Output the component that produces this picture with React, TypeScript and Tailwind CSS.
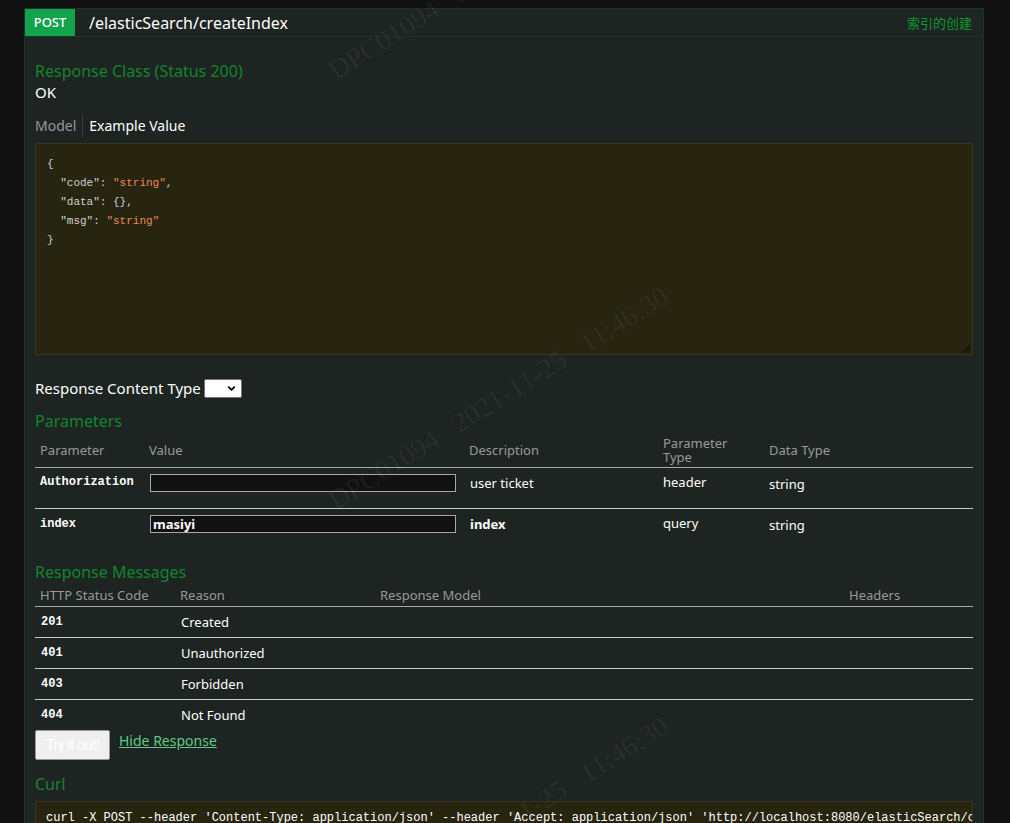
import { ChevronDown } from "lucide-react";

const sans = "font-['Noto_Sans','Noto_Sans_CJK_SC',sans-serif]";
const mono = "font-['Liberation_Mono','DejaVu_Sans_Mono',monospace]";

const params = [
  { name: "Authorization", value: "", desc: "user ticket", descBold: false, type: "header", dataType: "string" },
  { name: "index", value: "masiyi", desc: "index", descBold: true, type: "query", dataType: "string" },
];

const messages = [
  { code: "201", reason: "Created" },
  { code: "401", reason: "Unauthorized" },
  { code: "403", reason: "Forbidden" },
  { code: "404", reason: "Not Found" },
];

// faint rotated watermark tiles over the page
const marks = [
  { left: 338, top: 58 },
  { left: 338, top: 488 },
  { left: 338, top: 918 },
  { left: -332, top: 493 },
];

function Watermark({ left, top }: { left: number; top: number }) {
  return (
    <div
      className="pointer-events-none absolute origin-bottom-left -rotate-[32deg] whitespace-pre font-['Liberation_Serif',serif] text-[28px] leading-[26px] text-white/[0.06]"
      style={{ left, top }}
    >
      {"DPC01094   2021-11-25   11:46:30"}
    </div>
  );
}

export default function App() {
  return (
    <div className={`relative min-h-[823px] w-full overflow-hidden bg-[#121212] pt-[8px] ${sans}`}>
      <div className="ml-[24px] w-[960px] border border-[#1d3527] bg-[#1e2421]">
        {/* Header */}
        <div className="flex h-[28px] items-start border-b border-[#1d3527]">
          <span className="flex h-[27px] w-[50px] items-center justify-center bg-[#12a34c] text-[13px] font-medium text-white">
            POST
          </span>
          <span className="ml-[14px] text-[16px] leading-[28px] text-white">/elasticSearch/createIndex</span>
          <span className="ml-auto mr-[11px] text-[13px] leading-[28px] text-[#0c9a33]">索引的创建</span>
        </div>

        {/* Body */}
        <div className="px-[10px] pt-[24px]">
          <h4 className="text-[16px] leading-[20px] text-[#11862f]">Response Class (Status 200)</h4>
          <div className="mt-[1px] text-[15px] leading-[20px] text-white">OK</div>

          <div className="mt-[12px] flex items-center text-[14px] leading-[20px]">
            <span className="text-[#9a9a9a]">Model</span>
            <span className="mx-[6px] h-[24px] border-l border-[#3b3f3c]" />
            <span className="text-white">Example Value</span>
          </div>

          <div className="relative mt-[5px] h-[212px] border border-[#3a3720] bg-[#272410] px-[11px] pt-[11px]">
            <pre className={`${mono} text-[11px] leading-[19px] text-[#d0d0d0]`}>
              {"{\n"}
              {'  "code": '}
              <span className="text-[#ec8a55]">"string"</span>
              {",\n"}
              {'  "data": {},\n'}
              {'  "msg": '}
              <span className="text-[#ec8a55]">"string"</span>
              {"\n}"}
            </pre>
            <svg className="absolute bottom-[1px] right-[1px]" width="9" height="9" viewBox="0 0 9 9">
              <path d="M1 8 L8 1 M4 8 L8 4" stroke="#111" strokeWidth="1.2" />
            </svg>
          </div>

          <div className="mt-[23px] flex items-center text-[15px] leading-[20px] text-white">
            <span>Response Content Type</span>
            <span className="ml-[3px] flex h-[19px] w-[38px] items-center justify-end rounded-[2px] border border-[#767676] bg-white pr-[4px]">
              <ChevronDown className="h-[11px] w-[11px] text-black" strokeWidth={4} />
            </span>
          </div>

          <h4 className="mt-[13px] text-[16px] leading-[20px] text-[#11862f]">Parameters</h4>
          <table className="w-full table-fixed border-collapse text-left">
            <colgroup>
              <col className="w-[109px]" />
              <col className="w-[320px]" />
              <col className="w-[194px]" />
              <col className="w-[106px]" />
              <col />
            </colgroup>
            <thead>
              <tr className="h-[36px] border-b border-[#a8a8a8] text-[13px] leading-[14px] text-[#9a9a9a]">
                <th className="pl-[5px] pt-[2px] align-middle font-normal">Parameter</th>
                <th className="pl-[5px] pt-[2px] align-middle font-normal">Value</th>
                <th className="pl-[5px] pt-[2px] align-middle font-normal">Description</th>
                <th className="pl-[5px] pt-[2px] align-middle font-normal">
                  Parameter
                  <br />
                  Type
                </th>
                <th className="pl-[5px] pt-[2px] align-middle font-normal">Data Type</th>
              </tr>
            </thead>
            <tbody>
              {params.map((p, i) => (
                <tr
                  key={p.name}
                  className={`h-[41px] align-top text-[13px] leading-[18px] text-white ${
                    i === 0 ? "border-b border-[#c8c8c8]" : ""
                  }`}
                >
                  <td className={`pl-[5px] ${i === 0 ? "pt-[5px]" : "pt-[6px]"} ${mono} text-[12px] font-bold`}>{p.name}</td>
                  <td className="pl-[6px] pr-[8px] pt-[6px]">
                    <div className="h-[18px] w-[306px] border border-[#a9a9a9] bg-[#111111] px-[2px] text-[13px] font-bold leading-[16px] text-white">
                      {p.value}
                    </div>
                  </td>
                  <td className={`pl-[6px] pt-[6px] ${p.descBold ? "font-bold" : ""}`}>{p.desc}</td>
                  <td className="pl-[5px] pt-[5px]">{p.type}</td>
                  <td className="pl-[5px] pt-[7px]">{p.dataType}</td>
                </tr>
              ))}
            </tbody>
          </table>

          <h4 className="mt-[13px] text-[16px] leading-[20px] text-[#11862f]">Response Messages</h4>
          <table className="w-full table-fixed border-collapse text-left">
            <colgroup>
              <col className="w-[140px]" />
              <col className="w-[200px]" />
              <col className="w-[469px]" />
              <col />
            </colgroup>
            <thead>
              <tr className="h-[24px] border-b border-[#a8a8a8] text-[13px] leading-[16px] text-[#9a9a9a]">
                <th className="pl-[5px] pt-[2px] font-normal">HTTP Status Code</th>
                <th className="pl-[5px] pt-[2px] font-normal">Reason</th>
                <th className="pl-[5px] pt-[2px] font-normal">Response Model</th>
                <th className="pl-[5px] pt-[2px] font-normal">Headers</th>
              </tr>
            </thead>
            <tbody>
              {messages.map((m, i) => (
                <tr
                  key={m.code}
                  className={`h-[31px] text-[13px] leading-[18px] text-white ${
                    i < messages.length - 1 ? "border-b border-[#c8c8c8]" : ""
                  }`}
                >
                  <td className={`pl-[6px] ${mono} text-[12px] font-bold`}>{m.code}</td>
                  <td className="pl-[6px]">{m.reason}</td>
                  <td />
                  <td />
                </tr>
              ))}
            </tbody>
          </table>

          <div className="flex items-start">
            <button className="h-[30px] w-[75px] rounded-[2px] border border-[#9a9a9a] bg-[#efefef] font-['Roboto',sans-serif] text-[15px] tracking-[-0.8px] text-white">
              Try it out!
            </button>
            <a className="ml-[9px] mt-[1px] text-[14px] leading-[20px] text-[#5ccc86] underline">Hide Response</a>
          </div>

          <h4 className="mt-[14px] text-[16px] leading-[20px] text-[#11862f]">Curl</h4>
          <div className="mt-[7px] h-[40px] overflow-hidden border border-[#3a3720] bg-[#272410] px-[10px] pt-[8px]">
            <pre className={`${mono} whitespace-pre text-[12px] leading-[16px] text-white`}>
              curl -X POST --header 'Content-Type: application/json' --header 'Accept: application/json' 'http://localhost:8080/elasticSearch/createIndex?index=masiyi'
            </pre>
          </div>
        </div>
      </div>

      {marks.map((m, i) => (
        <Watermark key={i} left={m.left} top={m.top} />
      ))}
    </div>
  );
}
